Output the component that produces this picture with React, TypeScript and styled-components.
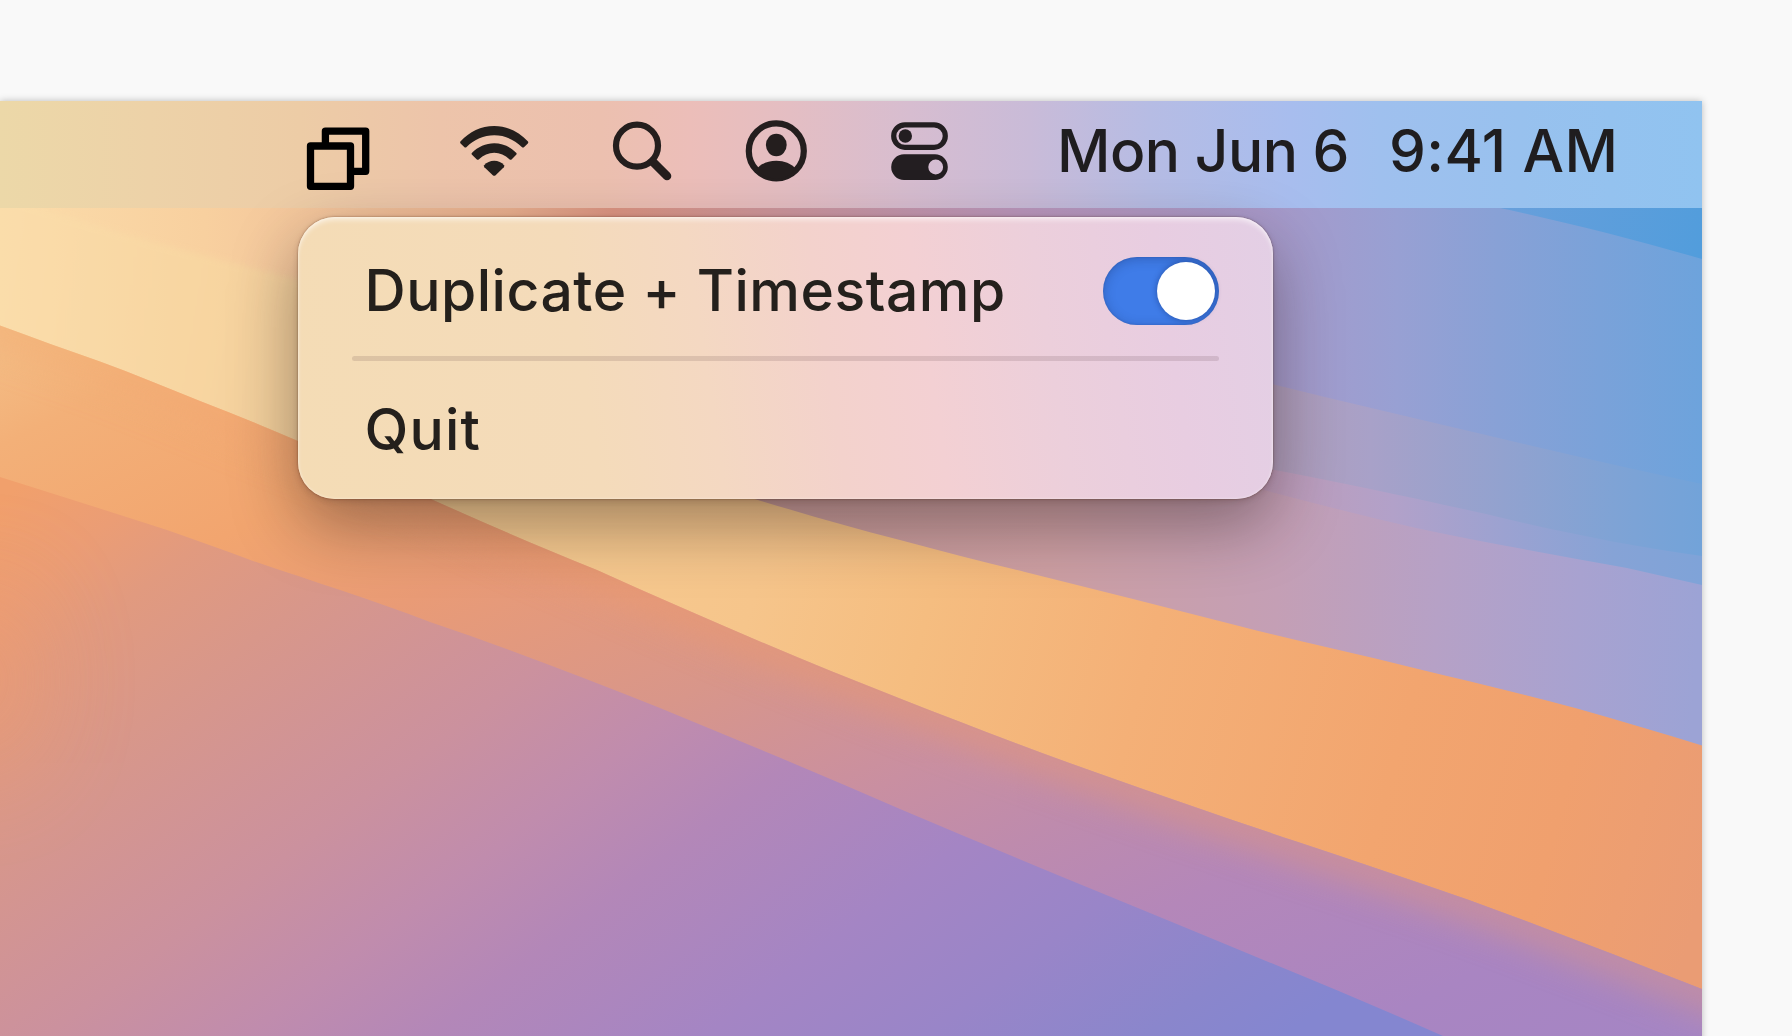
import React from "react";
import styled, { createGlobalStyle } from "styled-components";

const GlobalStyle = createGlobalStyle`
  html, body { margin: 0; padding: 0; overflow: hidden; background: #f9f9f9; }
  * { box-sizing: border-box; }
`;

const Page = styled.main`
  width: 1792px;
  height: 1036px;
  padding-top: 101px;
  overflow: hidden;
  background: #f9f9f9;
  font-family: Inter, "Liberation Sans", sans-serif;
`;

const Desktop = styled.section`
  position: relative;
  width: 1702px;
  height: 960px;
  box-shadow: 0 0 7px rgba(0, 0, 0, 0.25);
`;

const Backdrop = styled.svg`
  position: absolute;
  inset: 0;
  display: block;
`;

const MenuBar = styled.header`
  position: relative;
  display: flex;
  align-items: center;
  height: 107px;
  padding-left: 306px;
  color: #1f1d1f;
  background: linear-gradient(
    90deg,
    #ecd8a8 0px,
    #edd2a8 150px,
    #edcca6 300px,
    #edc4aa 440px,
    #ecc0af 600px,
    #ecbeb9 690px,
    #e4bec3 790px,
    #d7bdd0 910px,
    #c9bbd8 1030px,
    #b6bce4 1150px,
    #a8bdee 1290px,
    #9fc0ee 1380px,
    #98c1ee 1520px,
    #90c3f0 1702px
  );
`;

const Glyph = styled.svg<{ $after: number }>`
  display: block;
  flex: none;
  height: 107px;
  margin-right: ${(p) => p.$after}px;
`;

const Clock = styled.div`
  display: flex;
  align-items: baseline;
  gap: 40px;
  padding-bottom: 7px;
  font-size: 58.6px;
  line-height: 100px;
  font-weight: 500;
  white-space: nowrap;
`;

const ClockPart = styled.span<{ $tracking: number }>`
  letter-spacing: ${(p) => p.$tracking}px;
`;

const Menu = styled.nav`
  position: absolute;
  left: 298px;
  top: 116px;
  width: 975px;
  height: 282px;
  padding: 32px 54px 0 53.5px;
  border-radius: 37px;
  color: #24201c;
  background: linear-gradient(
    81deg,
    #f4dcb5 0%,
    #f4dbba 30%,
    #f4d8c2 42%,
    #f3d2cc 54%,
    #f3d0d3 64%,
    #eccfdb 76%,
    #e8cde1 88%,
    #e3cfe5 100%
  );
  box-shadow:
    inset 0 4px 5px -1px rgba(255, 255, 255, 0.55),
    inset 0 0 3px rgba(255, 255, 255, 0.5),
    0 0 2px rgba(70, 35, 20, 0.55),
    0 2px 6px rgba(60, 30, 20, 0.18),
    0 26px 66px rgba(30, 20, 20, 0.4);
`;

const MenuItem = styled.div`
  display: flex;
  align-items: center;
  justify-content: space-between;
  height: 84px;
  padding-left: 13px;
  font-size: 57px;
  font-weight: 500;
  white-space: nowrap;
`;

const Label = styled.span<{ $tracking: number }>`
  padding-bottom: 1px;
  letter-spacing: ${(p) => p.$tracking}px;
`;

const Rule = styled.hr`
  height: 5px;
  margin: 22.5px 0 27px;
  border: 0;
  border-radius: 3px;
  background: rgba(60, 30, 40, 0.13);
`;

const Switch = styled.span`
  display: flex;
  align-items: center;
  justify-content: flex-end;
  width: 116.5px;
  height: 67.5px;
  padding-right: 4px;
  border-radius: 34px;
  background: #3f7ce8;
  box-shadow:
    inset 0 2px 12px rgba(20, 40, 90, 0.3),
    inset 0 0 2px rgba(20, 40, 90, 0.25);
`;

const Knob = styled.span`
  width: 58.5px;
  height: 58.5px;
  border-radius: 50%;
  background: #fff;
  box-shadow: 0 0 6px rgba(10, 30, 90, 0.45);
`;

const EDGE_A = "M-20 318 L0 325.5 C34 338 67 350 100 361.5 C134 374 167 387.5 200 401 C233 414 266 427 298 441 C345 460 390 480 433 500 C487 524 542 548 597 570 C695 614 798 659 900 698.5 C965 724 1032 750 1099 773.5 C1165 797 1232 820 1298 842 C1355 861 1412 880 1469 900 C1546 928 1625 959 1702 989";
const EDGE_B = "M0 477 C56 495 112 512 167 530 C195 540 225 550 253 561 C312 581 372 600 430 622 C507 648 584 678 660 708 C740 741 820 774 900 809 C996 850 1090 888 1184 927 C1275 965 1365 1001 1452 1040";
const EDGE_C = "M560 434 C626 458 692 481 758 500 C805 514 852 528 900 540 C941 551 983 562 1025 572 C1097 590 1169 608 1241 626.5 C1298 641 1355 653 1412 667.5 C1468 681 1523 694 1577 708.5 C1619 720 1661 733 1702 745.5";

type Stop = [number, string];

const Ramp = ({ id, from, to, stops }: { id: string; from: [number, number]; to: [number, number]; stops: Stop[] }) => (
  <linearGradient id={id} gradientUnits="userSpaceOnUse" x1={from[0]} y1={from[1]} x2={to[0]} y2={to[1]}>
    {stops.map(([at, color]) => (
      <stop key={at} offset={at} stopColor={color} />
    ))}
  </linearGradient>
);

const Wallpaper = () => (
  <Backdrop width="1702" height="960" viewBox="0 101 1702 960">
    <defs>
      <Ramp id="sky" from={[0, 0]} to={[1702, 0]} stops={[[0, "#fbdcaa"], [0.12, "#f8d09f"], [0.2, "#f2c39b"], [0.3, "#eab08f"], [0.36, "#dd9583"], [0.45, "#cf969b"], [0.6, "#bb97bd"], [0.74, "#a899c9"], [0.82, "#98a0d3"], [0.88, "#88a1d6"], [0.94, "#7aa2d9"], [1, "#6da3dc"]]} />
      <Ramp id="cream" from={[0, 300]} to={[300, 350]} stops={[[0, "#fadeab"], [0.7, "#f8daa2"], [1, "#f0d39a"]]} />
      <Ramp id="corner" from={[1500, 200]} to={[1702, 240]} stops={[[0, "#689fdb"], [1, "#529ddc"]]} />
      <Ramp id="haze" from={[1260, 0]} to={[1702, 0]} stops={[[0, "#b19cb8"], [0.25, "#a8a1c8"], [0.55, "#92a2cf"], [0.8, "#7fa3d5"], [1, "#72a3d9"]]} />
      <Ramp id="lilac" from={[1260, 0]} to={[1702, 0]} stops={[[0, "#c09cb8"], [0.3, "#b2a1c9"], [0.55, "#9ca2d1"], [0.8, "#86a3d6"], [1, "#7fa3d8"]]} />
      <Ramp id="rose" from={[700, 500]} to={[1702, 560]} stops={[[0, "#c99c98"], [0.35, "#cd9fa3"], [0.58, "#c49fb5"], [0.74, "#b6a1c6"], [0.88, "#a8a2d0"], [1, "#9ca3d5"]]} />
      <Ramp id="gold" from={[420, 560]} to={[1700, 900]} stops={[[0, "#f6cd92"], [0.25, "#f6c58b"], [0.38, "#f5bd80"], [0.55, "#f4b077"], [0.75, "#f2a56f"], [0.88, "#f0a06e"], [1, "#ea9c74"]]} />
      <Ramp id="ribbon" from={[135, 268]} to={[765, 1518]} stops={[[0, "#f4be86"], [0.07, "#f3b078"], [0.2, "#f2a56f"], [0.3, "#e99b76"], [0.45, "#d8968a"], [0.57, "#c98fa1"], [0.65, "#be8bad"], [0.74, "#b487b9"], [0.88, "#a985c2"], [1, "#a485c4"]]} />
      <Ramp id="dusk" from={[240, 320]} to={[960, 1280]} stops={[[0, "#f1a06c"], [0.07, "#eb9d75"], [0.13, "#e19a7f"], [0.22, "#d8978a"], [0.38, "#cb919e"], [0.48, "#c08cad"], [0.57, "#b387b8"], [0.71, "#a485c4"], [0.82, "#9985c8"], [0.93, "#8a86cc"], [1, "#8486d0"]]} />
      <Ramp id="glow" from={[100, 0]} to={[1702, 0]} stops={[[0, "#f3ad75"], [0.25, "#ef9c6c"], [0.5, "#e59876"], [1, "#d59490"]]} />
      <clipPath id="ribbonClip">
        <path d={`${EDGE_A} V1100 H-20 Z`} />
      </clipPath>
      <clipPath id="duskClip">
        <path d={`${EDGE_B} V1100 H0 Z`} />
      </clipPath>
      <filter id="soft" filterUnits="userSpaceOnUse" x="-200" y="0" width="2200" height="1200">
        <feGaussianBlur stdDeviation="17" />
      </filter>
      <filter id="softer" filterUnits="userSpaceOnUse" x="-400" y="0" width="2400" height="1400">
        <feGaussianBlur stdDeviation="50" />
      </filter>
      <filter id="feather" filterUnits="userSpaceOnUse" x="-100" y="150" width="1000" height="500">
        <feGaussianBlur stdDeviation="3" />
      </filter>
    </defs>
    <rect y="101" width="1702" height="960" fill="url(#sky)" />
    <path d="M-20 190 L40 208 C100 227 160 245 230 262 L300 280 L700 420 V520 H-20 Z" fill="url(#cream)" opacity="0.55" filter="url(#feather)" />
    <path d="M1500 208 C1570 223 1636 240 1702 259 V208 Z" fill="url(#corner)" />
    <path d="M1260 381 C1335 400 1410 417 1486 435 C1560 453 1632 469 1702 484 V700 H1260 Z" fill="url(#haze)" />
    <path d="M1260 467 C1340 482 1410 497 1486 514 C1555 531 1630 546 1702 556 V700 H1260 Z" fill="url(#lilac)" />
    <path d="M600 400 L1260 489 C1312 503 1364 516 1416 528 C1487 543 1557 555 1627 568 L1702 585 V800 H600 Z" fill="url(#rose)" />
    <path d={`${EDGE_C} V1100 H300 V434 Z`} fill="url(#gold)" />
    <g clipPath="url(#ribbonClip)">
      <rect x="-20" y="300" width="1730" height="800" fill="url(#ribbon)" />
      <path d={`${EDGE_A} L1800 1030`} fill="none" stroke="url(#glow)" strokeWidth="42" filter="url(#soft)" opacity="0.6" />
    </g>
    <g clipPath="url(#duskClip)">
      <rect y="460" width="1702" height="640" fill="url(#dusk)" />
      <ellipse cx="-20" cy="680" rx="50" ry="90" fill="#ee9c70" opacity="0.6" filter="url(#softer)" />
    </g>
  </Backdrop>
);

const CopyGlyph = () => (
  <Glyph $after={90} width="64" viewBox="306 101 64 107" fill="none" stroke="#000" strokeWidth="7.3" strokeLinejoin="round">
    <path d="M325.4 145 V131.1 H365.7 V171.3 H351" />
    <rect x="310.5" y="146" width="40" height="40.3" />
  </Glyph>
);

const WifiGlyph = () => (
  <Glyph $after={82} width="70" viewBox="460 101 70 107" fill="#241f1c">
    <path d="M460.4 141.6 C469.5 131.5 481 126 494.2 126 C507.4 126 519 131.5 528 141.6 Q528.6 142.6 527.8 143.4 L524.2 147 Q523 148.1 521.8 147 C514.2 139.4 504.5 135.3 494.2 135.3 C483.9 135.3 474.2 139.4 466.6 147 Q465.4 148.1 464.2 147 L460.6 143.4 Q459.8 142.6 460.4 141.6 Z" />
    <path d="M471.8 153 C478 146.8 485.8 143.3 494.2 143.3 C502.6 143.3 510.4 146.8 516.4 153 Q517 154 516.2 154.8 L511.8 159.2 Q510.6 160.2 509.4 159.2 C505.2 155 499.8 152.7 494.2 152.7 C488.6 152.7 483.2 155 479 159.2 Q477.8 160.2 476.6 159.2 L472 154.8 Q471.2 154 471.8 153 Z" />
    <path d="M484.2 165.3 C486.6 162.4 490.3 160.8 494.2 160.8 C498.1 160.8 501.8 162.4 504 165.3 Q504.6 166.4 503.8 167.2 L495.6 175.2 Q494.2 176.5 492.8 175.2 L484.4 167.2 Q483.6 166.4 484.2 165.3 Z" />
  </Glyph>
);

const SearchGlyph = () => (
  <Glyph $after={73} width="60" viewBox="612 101 60 107" fill="none" stroke="#241e1d" strokeLinecap="round">
    <circle cx="637" cy="145.7" r="21" strokeWidth="6.2" />
    <path d="M653.5 162.5 L667 176" strokeWidth="8.6" />
  </Glyph>
);

const UserGlyph = () => (
  <Glyph $after={83} width="63" viewBox="745 101 63 107" fill="#241e1e">
    <circle cx="776.3" cy="150.9" r="27.5" fill="none" stroke="#241e1e" strokeWidth="6.2" />
    <ellipse cx="776.3" cy="145" rx="10.4" ry="11.2" />
    <path d="M757 168.5 C761.5 163.5 768.3 160.7 776.3 160.7 C784.3 160.7 791.1 163.5 795.6 168.5 C791 175 784 179 776.3 179 C768.6 179 761.6 175 757 168.5 Z" />
  </Glyph>
);

const ControlsGlyph = () => (
  <Glyph $after={108} width="58" viewBox="891 101 58 107" fill="#231e21">
    <rect x="893.7" y="124.9" width="51.6" height="22.4" rx="11.2" fill="none" stroke="#231e21" strokeWidth="5.2" />
    <circle cx="905.3" cy="136" r="6.7" />
    <path fillRule="evenodd" d="M904 154.3 H935 A12.8 12.8 0 0 1 935 179.9 H904 A12.8 12.8 0 0 1 904 154.3 Z M935.7 159.6 A7.4 7.4 0 1 0 935.7 174.4 A7.4 7.4 0 1 0 935.7 159.6 Z" />
  </Glyph>
);

export default function App() {
  return (
    <Page>
      <GlobalStyle />
      <Desktop>
        <Wallpaper />
        <MenuBar>
          <CopyGlyph />
          <WifiGlyph />
          <SearchGlyph />
          <UserGlyph />
          <ControlsGlyph />
          <Clock>
            <ClockPart $tracking={-0.5}>Mon Jun 6</ClockPart>
            <ClockPart $tracking={0.4}>9:41 AM</ClockPart>
          </Clock>
        </MenuBar>
        <Menu>
          <MenuItem>
            <Label $tracking={0.52}>Duplicate + Timestamp</Label>
            <Switch>
              <Knob />
            </Switch>
          </MenuItem>
          <Rule />
          <MenuItem>
            <Label $tracking={1.2}>Quit</Label>
          </MenuItem>
        </Menu>
      </Desktop>
    </Page>
  );
}
